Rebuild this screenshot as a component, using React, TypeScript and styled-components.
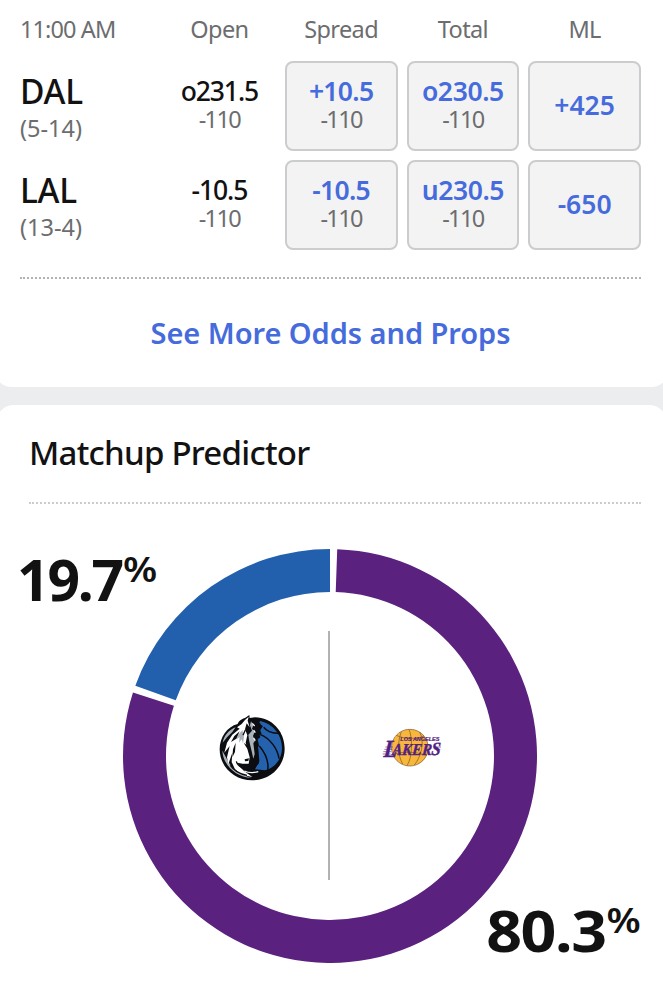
import styled, { createGlobalStyle } from "styled-components";

const GlobalStyle = createGlobalStyle`
    * {
        box-sizing:border-box;
    }
    body {
        margin:0;
        background-color:#ecedef;
        font-family:"Noto Sans", "Open Sans", sans-serif;
        color:#121213;
        overflow-x:hidden;
    }
`;

const Page = styled.main`
    display:flex;
    flex-direction:column;
    gap:18px;
    width:663px;
    height:995px;
    overflow:hidden;
`;
//odds
const OddsCard = styled.section`
    height:387px;
    flex:none;
    margin:0 -6px;
    padding:0 28px 0 26px;
    border-radius:0 0 18px 18px;
    background-color:#fff;
`;
const OddsGrid = styled.div`
    display:grid;
    grid-template-columns:134px repeat(4, 1fr);
    column-gap:9px;
`;
const HeadRow = styled(OddsGrid)`
    grid-template-rows:61px;
`;
const Rows = styled(OddsGrid)`
    grid-template-rows:90px 90px;
    row-gap:9px;
`;
const Heading = styled.div<{ $first?: boolean }>`
    padding-top:13px;
    line-height:32px;
    font-size:23.5px;
    letter-spacing:${(props) => (props.$first ? "-0.9px" : "-0.6px")};
    text-align:${(props) => (props.$first ? "left" : "center")};
    color:#6c6d6f;
`;
const Team = styled.div`
    padding-top:10px;
`;
const TeamName = styled.div`
    line-height:40px;
    font-size:33.5px;
    font-weight:500;
    letter-spacing:-0.3px;
`;
const Record = styled.div`
    line-height:34px;
    font-size:23.5px;
    color:#6c6d6f;
`;
const Cell = styled.div<{ $boxed?: boolean }>`
    display:flex;
    flex-direction:column;
    align-items:center;
    justify-content:center;
    padding-bottom:2px;
    border:2px solid ${(props) => (props.$boxed ? "#cbcccd" : "transparent")};
    border-radius:8px;
    background-color:${(props) => (props.$boxed ? "#f3f3f3" : "transparent")};
    color:${(props) => (props.$boxed ? "#466bdc" : "#121213")};
`;
const Line = styled.span<{ $tracking: number }>`
    line-height:28px;
    font-size:26.5px;
    font-weight:${(props) => (props.$tracking < -1 ? 500 : 600)};
    letter-spacing:${(props) => props.$tracking}px;
    white-space:nowrap;
`;
const Price = styled.span`
    line-height:28px;
    font-size:23.5px;
    letter-spacing:-1.6px;
    color:#6c6d6f;
`;
const Divider = styled.hr`
    margin:27px 0 0;
    border:0;
    border-top:2px dotted #b1b2b4;
`;
const LightDivider = styled(Divider)`
    margin:0 0 0 9px;
    border-color:#cbcccd;
`;
const MoreLink = styled.a`
    display:block;
    padding-top:33px;
    line-height:42px;
    font-size:29px;
    font-weight:600;
    letter-spacing:-0.05px;
    text-align:center;
    color:#466bdc;
`;
//predictor
const PredictorCard = styled.section`
    flex:1;
    margin:0 -4px;
    padding:0 26px 0 24px;
    border-radius:18px 18px 0 0;
    background-color:#fff;
`;
const Title = styled.h2`
    margin:0 0 0 9px;
    padding-top:24px;
    height:97px;
    line-height:48px;
    font-size:33px;
    font-weight:500;
    letter-spacing:-0.75px;
`;
const Chart = styled.div`
    display:grid;
    grid-template-areas:"chart";
    height:491px;
    margin:0 1px 0 -1px;
    padding-top:45px;
`;
const Donut = styled.svg`
    grid-area:chart;
    justify-self:center;
    display:block;
`;
const Teams = styled.div`
    grid-area:chart;
    justify-self:center;
    display:grid;
    grid-template-columns:108px 2px 108px;
    align-items:center;
    height:249px;
    margin:82px 2px 0 0;
`;
const Rule = styled.div`
    height:249px;
    background-color:#b1b2b4;
`;
const LogoSlot = styled.div<{ $home?: boolean }>`
    display:flex;
    margin:-15px 0 0 ${(props) => (props.$home ? "51px" : "-1px")};
`;
const Logo = styled.svg`
    display:block;
    flex:none;
    overflow:visible;
`;
const Percent = styled.div<{ $end?: boolean }>`
    grid-area:chart;
    display:flex;
    align-items:flex-start;
    justify-self:${(props) => (props.$end ? "end" : "start")};
    margin:${(props) => (props.$end ? "341px -1px 0 0" : "-10px 0 0 -2px")};
    line-height:80px;
    font-size:57px;
    font-weight:700;
    letter-spacing:${(props) => (props.$end ? "-1.3px" : "-2.2px")};
`;
const Wide = styled.span`
    margin-right:6px;
    transform:scaleX(1.1);
    transform-origin:right;
`;
const Sign = styled.span`
    line-height:60px;
    font-size:34px;
    font-weight:600;
    letter-spacing:0;
    transform:scaleX(1.15);
    transform-origin:right;
`;
const StartSign = styled(Sign)`
    margin-left:1px;
    transform-origin:left;
`;

const columns = ["Open", "Spread", "Total", "ML"];

//letter spacing of each column of lines
const tracking = [-1.1, -0.7, -0.4, 0];

const odds = [
    {
        team: "DAL",
        record: "(5-14)",
        lines: [["o231.5", "-110"], ["+10.5", "-110"], ["o230.5", "-110"], ["+425"]],
    },
    {
        team: "LAL",
        record: "(13-4)",
        lines: [["-10.5", "-110"], ["-10.5", "-110"], ["u230.5", "-110"], ["-650"]],
    },
];

//angles are clockwise degrees from the top of the ring
function slice(from: number, to: number) {
    const point = (r: number, deg: number) => {
        const a = (deg * Math.PI) / 180;
        return `${(207 + r * Math.sin(a)).toFixed(2)} ${(207 - r * Math.cos(a)).toFixed(2)}`;
    };
    const large = to - from > 180 ? 1 : 0;
    return `M${point(207, from)}A207 207 0 ${large} 1 ${point(207, to)}L${point(164, to)}A164 164 0 ${large} 0 ${point(164, from)}Z`;
}

function MavsLogo() {
    return (
        <Logo width="67" height="68" viewBox="42 42 201 204">
            <path fill="#0b0d10" d="M133 45L120 54C106 58 100 66 98 72C66 80 44 112 44 148C44 200 88 241 141 241C196 241 239 199 239 146C239 94 200 52 150 52L134 54Z" />
            <path fill="#a9b2ba" d="M92 82C72 90 57 106 53 128L66 112L82 96ZM52 152C54 194 92 232 140 234C112 226 86 212 74 192Z" />
            <path fill="#2462ae" d="M166 63C204 72 231 104 231 145C231 178 208 205 180 211L150 208L163 184L160 146L152 122L166 112L161 98L174 78L160 70Z" />
            <path fill="none" stroke="#0b0d10" strokeWidth="4.5" d="M176 82C188 97 208 101 226 99M166 104C194 114 218 146 222 176M163 138C180 158 192 186 188 212" />
            <path fill="#0b0d10" d="M140 56L160 64L168 73L162 82L170 102L156 110L162 136L156 150L162 190L146 206L130 198L138 120Z" />
            <path fill="#fff" d="M131 50L120 60L110 72L96 82L104 86L82 104L66 128L58 158L74 138L66 172L70 192L82 158L80 186L90 208L110 224L142 231L118 214L104 200L98 188L112 191L131 191L134 172L128 150L122 128L127 106L120 88L125 70L134 82L128 62Z" />
            <path fill="#a9b2ba" d="M138 64L145 76L141 86L149 96L144 108L150 122L145 130L149 162L145 176L140 154L132 120L130 104L141 92L135 76ZM112 90L100 104L94 118L104 112L102 128L110 118L114 130L117 112Z" />
            <path fill="#0b0d10" d="M104 94L88 108L78 126L94 116ZM92 128L84 148L82 172L90 156ZM116 128L132 140L133 152L124 142ZM119 178L132 175L130 183L120 184Z" />
            <path fill="none" stroke="#0b0d10" strokeWidth="4" d="M121 90L114 106M94 184C98 200 114 208 150 208M76 196C88 214 104 222 126 226" />
            <path fill="none" stroke="#fff" strokeWidth="3.5" d="M142 70L149 78M146 90L151 98M146 114L151 122M118 213C132 219 146 219 160 215" />
        </Logo>
    );
}

function LakersLogo() {
    return (
        <Logo width="61" height="40" viewBox="30 42 183 120">
            <circle cx="117" cy="101" r="55" fill="#f8b63c" />
            <path fill="none" stroke="#6b4a20" strokeWidth="1.8" d="M117 46A55 55 0 1 1 116 46M114 46C124 68 126 128 108 155M76 64C100 76 139 76 159 66M91 53C78 88 81 125 95 150M146 54C163 86 149 130 130 153M66 122C91 112 132 112 167 124" />
            <path stroke="#522082" strokeWidth="1.8" d="M43 99H66M40 106H64M37 113H61M35 120H59M196 99H210M198 106H208" />
            <text
                x="0"
                y="0"
                transform="translate(37 124) skewX(-5) scale(.89 1)"
                fontFamily="Liberation Serif, serif"
                fontStyle="italic"
                fontWeight="700"
                fontSize="50"
                fill="#522082"
                stroke="#522082"
                strokeWidth="1.2"
            >
                <tspan fontSize="74" dy="4">L</tspan>
                <tspan dx="-16" dy="-4">AKER</tspan>
                <tspan fontSize="56" dx="-2">S</tspan>
            </text>
            <text x="88" y="82" fontFamily="Liberation Sans, sans-serif" fontStyle="italic" fontWeight="700" fontSize="13.5" textLength="117" lengthAdjust="spacingAndGlyphs" fill="#522082" stroke="#522082" strokeWidth=".5">LOS ANGELES</text>
        </Logo>
    );
}

function App() {
    return (
        <>
            <GlobalStyle />
            <Page>
                <OddsCard>
                    <HeadRow>
                        <Heading $first>11:00 AM</Heading>
                        {columns.map((column) => (
                            <Heading key={column}>{column}</Heading>
                        ))}
                    </HeadRow>
                    <Rows>
                        {odds.map((row) => [
                            <Team key={row.team}>
                                <TeamName>{row.team}</TeamName>
                                <Record>{row.record}</Record>
                            </Team>,
                            ...row.lines.map(([line, price], index) => (
                                <Cell key={row.team + index} $boxed={index > 0}>
                                    <Line $tracking={tracking[index]}>{line}</Line>
                                    {price && <Price>{price}</Price>}
                                </Cell>
                            )),
                        ])}
                    </Rows>
                    <Divider />
                    <MoreLink>See More Odds and Props</MoreLink>
                </OddsCard>
                <PredictorCard>
                    <Title>Matchup Predictor</Title>
                    <LightDivider />
                    <Chart>
                        <Donut width="414" height="414" viewBox="0 0 414 414">
                            <path fill="#5a217f" d={slice(2, 287.87)} />
                            <path fill="#2260ad" d={slice(289.87, 360)} />
                        </Donut>
                        <Teams>
                            <LogoSlot>
                                <MavsLogo />
                            </LogoSlot>
                            <Rule />
                            <LogoSlot $home>
                                <LakersLogo />
                            </LogoSlot>
                        </Teams>
                        <Percent>
                            19.7<StartSign>%</StartSign>
                        </Percent>
                        <Percent $end>
                            <Wide>80.3</Wide>
                            <Sign>%</Sign>
                        </Percent>
                    </Chart>
                </PredictorCard>
            </Page>
        </>
    );
}

export default App;
